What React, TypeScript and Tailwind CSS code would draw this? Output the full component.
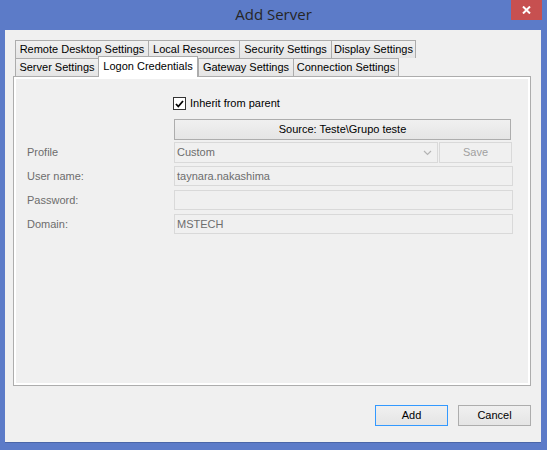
import React from 'react';

const ui = { fontFamily: '"Liberation Sans", Arial, sans-serif' };

const row1 = [
  { label: 'Remote Desktop Settings', w: 'w-[133px]' },
  { label: 'Local Resources', w: 'w-[91px]' },
  { label: 'Security Settings', w: 'w-[92px]' },
  { label: 'Display Settings', w: 'w-[85px]' },
];

const Tab: React.FC<{ label: string; w: string; last?: boolean }> = ({ label, w, last }) => (
  <div
    className={`${w} h-[18px] flex items-center justify-center border-t border-l ${last ? 'border-r' : ''} border-[#acacac] bg-gradient-to-b from-[#f0f0f0] to-[#e5e5e5] text-[11px] text-black whitespace-nowrap`}
  >
    {label}
  </div>
);

const TextBox: React.FC<{ value?: string }> = ({ value }) => (
  <div className="h-[20px] border border-[#d9d9d9] bg-[#f0f0f0] flex items-center px-[2px] text-[11px] text-[#6d6d6d]">
    {value}
  </div>
);

export default function App() {
  return (
    <div className="w-[547px] h-[450px] bg-[#5c7bc8] flex flex-col overflow-hidden" style={ui}>
      {/* Title bar */}
      <div className="relative h-[30px] flex items-center justify-center">
        <span className="text-[15px] text-[#262626] -mt-[1px]" style={{ fontFamily: '"Open Sans", "Noto Sans", sans-serif' }}>
          Add Server
        </span>
        <div className="absolute right-[5px] top-0 w-[31px] h-[20px] bg-[#c75050] flex items-center justify-center">
          <svg width="9" height="8" viewBox="0 0 9 8">
            <path d="M1 0.5 L8 7.5 M8 0.5 L1 7.5" stroke="white" strokeWidth="2" />
          </svg>
        </div>
      </div>

      {/* Client area */}
      <div className="ml-[5px] mr-[6px] h-[413px] bg-[#f0f0f0] border-b border-[#4a66a8] flex flex-col pl-[8px] pr-[10px] pt-[10px]">
        {/* Tabs */}
        <div className="flex ml-[2px]">
          {row1.map((t, i) => (
            <Tab key={t.label} label={t.label} w={t.w} last={i === row1.length - 1} />
          ))}
        </div>
        <div className="flex ml-[2px] h-[18px] border-l border-[#acacac]">
          <div className="w-[82px] h-[18px] flex items-center justify-center border-t border-[#acacac] bg-gradient-to-b from-[#f0f0f0] to-[#e5e5e5] text-[11px]">
            Server Settings
          </div>
          <div className="relative z-10 w-[100px] h-[21px] -mt-[2px] flex items-center justify-center pb-[2px] border-t border-l border-r border-[#acacac] bg-white text-[11px]">
            Logon Credentials
          </div>
          <Tab label="Gateway Settings" w="w-[95px]" />
          <Tab label="Connection Settings" w="w-[106px]" last />
        </div>

        {/* Tab page */}
        <div className="w-[518px] h-[310px] border border-[#adadad] bg-white p-[2px]">
          <div className="w-full h-full bg-[#f0f0f0] flex flex-col pr-[15px] text-[11px]">
            {/* Inherit */}
            <div className="flex items-center h-[13px] mt-[18px] ml-[157px]">
              <div className="w-[13px] h-[13px] border border-[#333333] bg-white flex items-center justify-center">
                <svg width="9" height="8" viewBox="0 0 9 8">
                  <path d="M1 4 L3.3 6.5 L8 1" stroke="black" strokeWidth="1.8" fill="none" />
                </svg>
              </div>
              <span className="ml-[4px] text-black">Inherit from parent</span>
            </div>

            {/* Source */}
            <div className="mt-[9px] ml-[158px] mr-[2px] h-[21px] border border-[#adadad] bg-gradient-to-b from-[#f0f0f0] to-[#e5e5e5] flex items-center justify-center text-black">
              Source: Teste\Grupo teste
            </div>

            {/* Profile */}
            <div className="mt-[2px] flex items-center">
              <span className="w-[158px] pl-[11px] text-[#6d6d6d]">Profile</span>
              <div className="flex-1 h-[21px] border border-[#d9d9d9] bg-[#f0f0f0] flex items-center justify-between px-[2px] text-[#6d6d6d]">
                <span>Custom</span>
                <svg width="9" height="6" viewBox="0 0 9 6" className="mr-[3px]">
                  <path d="M1 1 L4.5 4.5 L8 1" stroke="#b4b4b4" strokeWidth="1.2" fill="none" />
                </svg>
              </div>
              <div className="ml-[1px] w-[73px] h-[21px] border border-[#d9d9d9] bg-[#f0f0f0] flex items-center justify-center text-[#a0a0a0] mr-[1px]">
                Save
              </div>
            </div>

            {/* Fields */}
            {[
              { label: 'User name:', value: 'taynara.nakashima' },
              { label: 'Password:', value: '' },
              { label: 'Domain:', value: 'MSTECH' },
            ].map((f, i) => (
              <div key={f.label} className={`flex items-center ${i === 0 ? 'mt-[3px]' : 'mt-[4px]'}`}>
                <span className="w-[158px] pl-[11px] text-[#6d6d6d]">{f.label}</span>
                <div className="flex-1">
                  <TextBox value={f.value} />
                </div>
              </div>
            ))}
          </div>
        </div>

        {/* Buttons */}
        <div className="flex justify-end mt-[19px] gap-[10px] mr-[0px]">
          <button className="w-[73px] h-[21px] border border-[#3399ff] bg-gradient-to-b from-[#f0f0f0] to-[#e5e5e5] text-[11px] text-black">
            Add
          </button>
          <button className="w-[73px] h-[21px] border border-[#adadad] bg-gradient-to-b from-[#f0f0f0] to-[#e5e5e5] text-[11px] text-black">
            Cancel
          </button>
        </div>
      </div>
    </div>
  );
}
